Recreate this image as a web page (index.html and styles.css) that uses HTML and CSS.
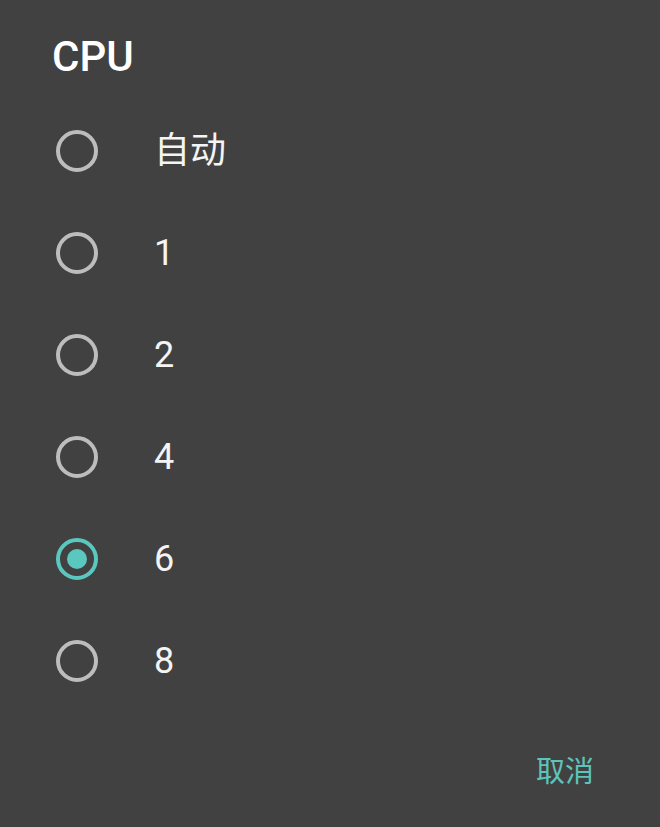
FILE: index.html
```html
<!DOCTYPE html>
<html lang="zh">
<head>
<meta charset="utf-8">
<link rel="stylesheet" href="styles.css">
</head>
<body>
<div class="dialog">
  <div class="title">CPU</div>
  <div class="list">
    <div class="row"><span class="radio"></span><span class="label">自动</span></div>
    <div class="row"><span class="radio"></span><span class="label">1</span></div>
    <div class="row"><span class="radio"></span><span class="label">2</span></div>
    <div class="row"><span class="radio"></span><span class="label">4</span></div>
    <div class="row"><span class="radio checked"></span><span class="label">6</span></div>
    <div class="row"><span class="radio"></span><span class="label">8</span></div>
  </div>
  <div class="actions"><span class="btn">取消</span></div>
</div>
</body>
</html>
```
FILE: styles.css
```css
html, body {
  margin: 0;
  padding: 0;
  background: #414141;
}
.dialog {
  width: 660px;
  height: 827px;
  box-sizing: border-box;
  padding-top: 33px;
  font-family: Roboto, "Noto Sans CJK SC", sans-serif;
  color: #f4f4f4;
}
.title {
  padding-left: 52px;
  font-size: 42px;
  font-weight: 500;
  line-height: 48px;
  color: #ffffff;
}
.list {
  margin-top: 19px;
}
.row {
  height: 102px;
  display: flex;
  align-items: center;
  padding-left: 56px;
}
.radio {
  width: 42px;
  height: 42px;
  box-sizing: border-box;
  border: 4px solid #bdbdbd;
  border-radius: 50%;
  display: flex;
  align-items: center;
  justify-content: center;
  flex-shrink: 0;
}
.radio.checked {
  border-color: #5ac8bf;
}
.radio.checked::after {
  content: "";
  width: 20px;
  height: 20px;
  border-radius: 50%;
  background: #5ac8bf;
}
.label {
  margin-left: 56px;
  font-size: 36px;
  line-height: 44px;
}
.actions {
  display: flex;
  justify-content: flex-end;
  padding-right: 66px;
  margin-top: 40px;
}
.btn {
  font-size: 29px;
  line-height: 40px;
  color: #5cc4bb;
}
```
